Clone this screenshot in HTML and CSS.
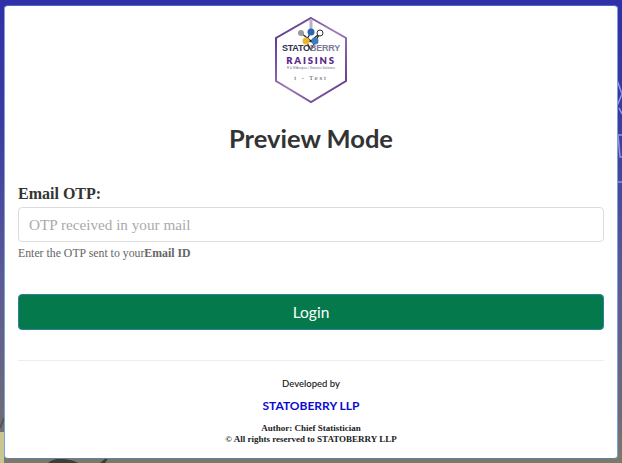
FILE: index.html
```html
<!DOCTYPE html>
<html lang="en">
<head>
<meta charset="utf-8">
<title>Preview Mode</title>
<link rel="stylesheet" href="styles.css">
</head>
<body>
<svg class="backdrop" width="622" height="463" viewBox="0 0 622 463" aria-hidden="true">
  <path d="M617 80l5 14-5 12M619 108l3 6M618 135h4M618 135l2 22h2M617 182h5" fill="none" stroke="#9b93e0" stroke-width="1.500"/>
  <path d="M0 428l4-10" stroke="#555" stroke-width="2"/>
  <path d="M48 463q6-5 16-4t14 4zM100 463l7-6h2l-4 6z" fill="#3d4030"/>
</svg>
<main class="card">
  <header class="brand">
    <svg class="logo" width="76" height="90" viewBox="0 0 76 90" aria-hidden="true">
      <defs>
        <linearGradient id="hex" x1="0" y1="0" x2="1" y2="1">
          <stop offset="0" stop-color="#4a2a86"/>
          <stop offset=".5" stop-color="#a07ab8"/>
          <stop offset="1" stop-color="#5a2a80"/>
        </linearGradient>
      </defs>
      <polygon points="38,2 73,22 73,65 38,86 3,65 3,22" fill="none" stroke="url(#hex)" stroke-width="2"/>
      <path d="M38 4v12M28 17l10 8 9-8M38 16l-5 9 9 1 5-9M33 25l5 9 4-8" fill="none" stroke="#222" stroke-width="1.200"/>
      <rect x="36.500" y="4" width="3" height="9" fill="#b9b2c6"/>
      <circle cx="28" cy="17" r="3" fill="#9a9a9a"/>
      <circle cx="47" cy="17" r="3" fill="#fff" stroke="#333"/>
      <circle cx="38" cy="16" r="3.500" fill="#2a66b8"/>
      <circle cx="33" cy="25" r="3.500" fill="#eab530"/>
      <circle cx="42" cy="25" r="3.500" fill="#3a7ac0"/>
      <text class="logo-stat" x="38" y="35" text-anchor="middle"><tspan class="logo-dark">STATO</tspan>BERRY</text>
      <text class="logo-raisins" x="38" y="48" text-anchor="middle">RAISINS</text>
      <text class="logo-tiny" x="38" y="53" text-anchor="middle">R &amp; M Analysis / Statistics Solutions</text>
      <text class="logo-test" x="38" y="64" text-anchor="middle">t - Test</text>
    </svg>
    <h1 class="title">Preview Mode</h1>
  </header>
  <form class="form">
    <label class="label" for="otp">Email OTP:</label>
    <input class="input" id="otp" type="text" placeholder="OTP received in your mail">
    <p class="hint">Enter the OTP sent to your<b>Email ID</b></p>
    <button class="login" type="button">Login</button>
  </form>
  <footer class="foot">
    <p class="dev">Developed by</p>
    <a class="company" href="#">STATOBERRY LLP</a>
    <p class="rights">Author: Chief Statistician<br>© All rights reserved to STATOBERRY LLP</p>
  </footer>
</main>
</body>
</html>
```
FILE: styles.css
```css
* { box-sizing: border-box; }
html, body { height: 100%; }
body {
  margin: 0;
  padding: 5px 4px 4px 4px;
  overflow: hidden;
  background:
    linear-gradient(90deg, #c9c68f 0, #c9c68f 4px, transparent 4px) 0 432px / 100% 31px no-repeat,
    linear-gradient(180deg, #3030a8 0, #3a3aa2 25%, #5a5a96 60%, #6c6c78 90%, #7b7a66 100%);
}
.backdrop { position: absolute; left: 0; top: 0; }
.card {
  position: relative;
  height: 454px;
  background: #fff;
  border: 1px solid #7f9fd8;
  border-top-color: #4a66c8;
  border-bottom-color: #5f80b0;
  border-radius: 4px;
  padding: 10px 13px 0;
  display: flex;
  flex-direction: column;
}
.brand { display: flex; flex-direction: column; align-items: center; }
.logo { display: block; }
.logo-stat { font: 700 9px "Liberation Sans", sans-serif; fill: #7d7898; letter-spacing: -.2px; }
.logo-dark { fill: #33304a; }
.logo-raisins { font: 800 9.500px "Lato", sans-serif; fill: #5a2a8a; letter-spacing: 1.800px; }
.logo-tiny { font: 400 3px "Liberation Sans", sans-serif; fill: #7a6a90; }
.logo-test { font: 400 7px "Liberation Serif", serif; fill: #555; letter-spacing: 1.800px; }
.title {
  margin: 16px 0 0;
  font: 700 25.500px/32px "Lato", sans-serif;
  color: #333;
}
.form { display: flex; flex-direction: column; margin-top: 29px; }
.label { font: 700 16px/22px "Liberation Serif", serif; color: #333; }
.input {
  height: 35px;
  margin-top: 2px;
  padding: 0 10px;
  border: 1px solid #dcdcdc;
  border-radius: 4px;
  background: #fff;
  font: 15.200px "Liberation Serif", serif;
}
.input::placeholder { color: #aaa; opacity: 1; }
.hint { margin: 3px 0 0; font: 11.800px/16px "Liberation Serif", serif; color: #666; }
.login {
  height: 36px;
  margin-top: 33px;
  border: 1px solid #2f7fa0;
  border-radius: 4px;
  background: #047a4c;
  color: #fff;
  font: 400 15.500px "Lato", sans-serif;
}
.foot {
  margin-top: 30px;
  padding-top: 16px;
  border-top: 1px solid #eee;
  display: flex;
  flex-direction: column;
  align-items: center;
  text-align: center;
}
.dev { margin: 0; font: 500 9.500px/14px "Lato", sans-serif; color: #111; }
.company { margin-top: 7px; font: 700 12px/16px "Lato", sans-serif; color: #0b0bd0; text-decoration: none; }
.rights { margin: 9px 0 0; font: 700 9px/11px "Liberation Serif", serif; color: #222; }
```
